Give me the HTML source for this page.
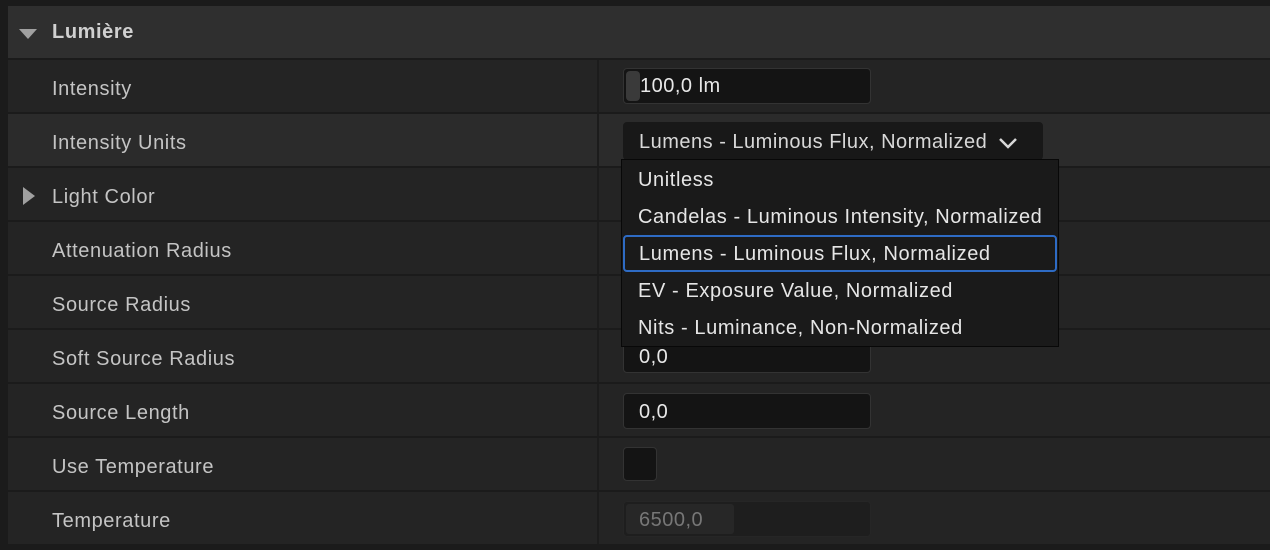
<html><head><style>
body{margin:0;width:1270px;height:550px;background:#1b1b1b;overflow:hidden;font-family:"Liberation Sans",sans-serif;position:relative}
.r{position:absolute;left:8px;width:1262px;height:52px;background:#242424}
.r .l{position:absolute;left:44px;top:3px;line-height:52px;font-size:20px;letter-spacing:0.6px;color:#c4c4c4}
.r .d{position:absolute;left:589px;top:0;width:2px;height:52px;background:#1c1c1c}
.in{position:absolute;left:615px;width:248px;height:34px;background:#141414;border:1px solid #333;border-radius:4px;box-sizing:border-box;color:#e8e8e8;font-size:20px;letter-spacing:0.5px;line-height:34px;padding-left:15px}
.item{height:37px;line-height:38px;padding-left:16px;font-size:20px;letter-spacing:0.6px;color:#e6e6e6;box-sizing:border-box}
</style></head><body>
<div class="r" style="top:6px;background:#2f2f2f"><div class="l" style="font-weight:bold;color:#d0d0d0;top:0">Lumière</div>
<svg style="position:absolute;left:10px;top:22px" width="20" height="14"><path d="M1 1H19L10 11Z" fill="#a0a0a0"/></svg></div>
<div class="r" style="top:60px"><div class="l">Intensity</div><div class="d"></div>
<div class="in" style="top:8px;padding-left:16px;height:36px">100,0 lm<div style="position:absolute;left:2px;top:2px;width:14px;height:30px;background:#3a3a3a;border-radius:4px"></div></div></div>
<div class="r" style="top:114px;background:#2b2b2b"><div class="l">Intensity Units</div><div class="d"></div>
<div class="in" style="top:8px;width:420px;height:38px;line-height:38px;background:#181818;border-color:#181818;color:#d8d8d8">Lumens - Luminous Flux, Normalized
<svg style="position:absolute;left:374px;top:13px" width="20" height="14"><path d="M2 3L10 11L18 3" stroke="#d8d8d8" stroke-width="2.5" fill="none"/></svg></div></div>
<div class="r" style="top:168px"><div class="l">Light Color</div><div class="d"></div>
<svg style="position:absolute;left:14px;top:18px" width="14" height="20"><path d="M1 1V19L13 10Z" fill="#a0a0a0"/></svg></div>
<div class="r" style="top:222px"><div class="l">Attenuation Radius</div><div class="d"></div></div>
<div class="r" style="top:276px"><div class="l">Source Radius</div><div class="d"></div></div>
<div class="r" style="top:330px"><div class="l">Soft Source Radius</div><div class="d"></div>
<div class="in" style="top:9px">0,0</div></div>
<div class="r" style="top:384px"><div class="l">Source Length</div><div class="d"></div>
<div class="in" style="top:9px;height:36px;line-height:36px">0,0</div></div>
<div class="r" style="top:438px"><div class="l">Use Temperature</div><div class="d"></div>
<div class="in" style="top:9px;width:34px;height:34px"></div></div>
<div class="r" style="top:492px"><div class="l">Temperature</div><div class="d"></div>
<div class="in" style="top:9px;background:#1e1e1e;border-color:#262626;color:#777;height:36px;line-height:36px"><div style="position:absolute;left:2px;top:2px;width:108px;height:30px;background:#272727;border-radius:3px"></div><span style="position:relative">6500,0</span></div></div>
<div style="position:absolute;left:621px;top:159px;width:438px;height:188px;background:#1a1a1a;border:1px solid #080808;box-sizing:border-box;padding-top:1px">
<div class="item">Unitless</div>
<div class="item">Candelas - Luminous Intensity, Normalized</div>
<div class="item" style="border:2px solid #2e6bc4;border-radius:4px;margin:0 1px;padding-left:14px;line-height:35px">Lumens - Luminous Flux, Normalized</div>
<div class="item">EV - Exposure Value, Normalized</div>
<div class="item">Nits - Luminance, Non-Normalized</div>
</div>
</body></html>
